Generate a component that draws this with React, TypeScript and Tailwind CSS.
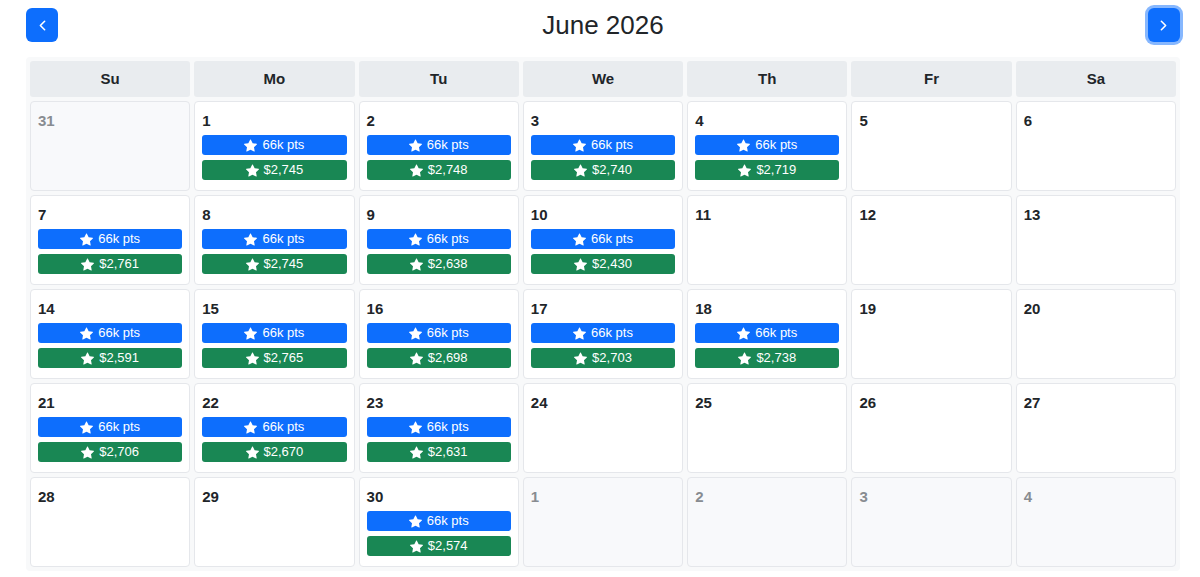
import { ChevronLeft, ChevronRight } from "lucide-react";

type Day = { n: number; out?: boolean; price?: string };

const prices: Record<number, string> = {
  1: "$2,745", 2: "$2,748", 3: "$2,740", 4: "$2,719",
  7: "$2,761", 8: "$2,745", 9: "$2,638", 10: "$2,430",
  14: "$2,591", 15: "$2,765", 16: "$2,698", 17: "$2,703", 18: "$2,738",
  21: "$2,706", 22: "$2,670", 23: "$2,631",
  30: "$2,574",
};

const days: Day[] = [
  { n: 31, out: true },
  ...Array.from({ length: 30 }, (_, i) => ({ n: i + 1, price: prices[i + 1] })),
  { n: 1, out: true },
  { n: 2, out: true },
  { n: 3, out: true },
  { n: 4, out: true },
];

const Star = () => (
  <svg viewBox="0 0 16 16" width="13" height="13" className="mr-[5px]">
    <path
      fill="currentColor"
      d="M3.612 15.443c-.386.198-.824-.149-.746-.592l.83-4.73L.173 6.765c-.329-.314-.158-.888.283-.95l4.898-.696L7.538.792c.197-.39.73-.39.927 0l2.184 4.327 4.898.696c.441.062.612.636.282.95l-3.522 3.356.83 4.73c.078.443-.36.79-.746.592L8 13.187l-4.389 2.256z"
    />
  </svg>
);

const Pill = ({ color, text }: { color: string; text: string }) => (
  <div
    className={`flex h-[20px] items-center justify-center rounded-[3px] text-[13px] text-white ${color}`}
  >
    <Star />
    <span>{text}</span>
  </div>
);

export default function App() {
  const heads = ["Su", "Mo", "Tu", "We", "Th", "Fr", "Sa"];
  return (
    <div
      className="bg-white pl-[26px] pr-[20px] pt-[8px] text-[#212529]"
      style={{ fontFamily: "'Liberation Sans', Arial, sans-serif" }}
    >
      <div className="flex items-center justify-between">
        <button className="flex h-[34px] w-[32px] items-center justify-center rounded-[6px] bg-[#0d6efd] text-white">
          <ChevronLeft size={17} strokeWidth={2.25} />
        </button>
        <h2 className="text-[26px] font-medium leading-[34px]">June 2026</h2>
        <button className="flex h-[34px] w-[32px] items-center justify-center rounded-[6px] bg-[#0d6efd] text-white ring-[3px] ring-[#86b7fe]">
          <ChevronRight size={17} strokeWidth={2.25} />
        </button>
      </div>
      <div className="mt-[15px] grid grid-cols-7 gap-[4px] rounded-[4px] bg-[#f8f9fa] p-[4px]">
        {heads.map((h) => (
          <div
            key={h}
            className="flex h-[36px] items-center justify-center rounded-[3px] bg-[#e9ecef] text-[15px] font-bold"
          >
            {h}
          </div>
        ))}
        {days.map((d, i) => (
          <div
            key={i}
            className={`h-[90px] rounded-[4px] border border-[#e5e7eb] px-[7px] pt-[7px] ${
              d.out ? "bg-[#f8f9fb]" : "bg-white"
            }`}
          >
            <div
              className={`text-[15px] font-bold leading-[24px] ${
                d.out ? "text-[#888c91]" : "text-[#212529]"
              }`}
            >
              {d.n}
            </div>
            {d.price && (
              <div className="mt-[2px] flex flex-col gap-[5px]">
                <Pill color="bg-[#0d6efd]" text="66k pts" />
                <Pill color="bg-[#198754]" text={d.price} />
              </div>
            )}
          </div>
        ))}
      </div>
    </div>
  );
}
